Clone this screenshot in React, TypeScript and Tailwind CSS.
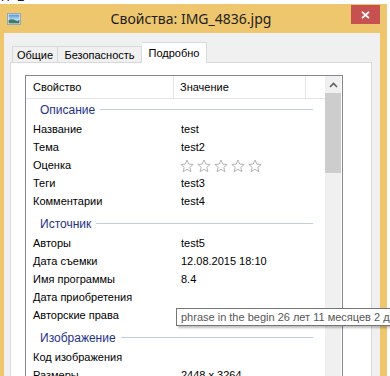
const groups: { title: string; rows: [string, string][] }[] = [
  {
    title: 'Описание',
    rows: [['Название', 'test'], ['Тема', 'test2'], ['Оценка', '*'], ['Теги', 'test3'], ['Комментарии', 'test4']],
  },
  {
    title: 'Источник',
    rows: [['Авторы', 'test5'], ['Дата съемки', '12.08.2015 18:10'], ['Имя программы', '8.4'], ['Дата приобретения', ''], ['Авторские права', '']],
  },
  {
    title: 'Изображение',
    rows: [['Код изображения', ''], ['Размеры', '2448 x 3264']],
  },
]

function Star() {
  return (
    <svg width="14" height="14" viewBox="0 0 14 14" className="shrink-0">
      <polygon points="7,1 8.8,5.1 13.2,5.4 9.8,8.3 10.9,12.7 7,10.3 3.1,12.7 4.2,8.3 0.8,5.4 5.2,5.1"
        fill="#fff" stroke="#b4b4b4" strokeWidth="1" strokeLinejoin="round" />
    </svg>
  )
}

function Stars() {
  return (
    <div className="flex items-center gap-[3px] -ml-px">
      {[0, 1, 2, 3, 4].map((i) => <Star key={i} />)}
    </div>
  )
}

function PictureIcon() {
  return (
    <svg width="14" height="12" viewBox="0 0 14 12">
      <defs>
        <linearGradient id="sky" x1="0" y1="0" x2="0" y2="1">
          <stop offset="0" stopColor="#4f95d4" />
          <stop offset="1" stopColor="#cfe6f5" />
        </linearGradient>
      </defs>
      <rect x="0.5" y="0.5" width="13" height="11" fill="#fff" stroke="#9aa7b3" />
      <rect x="1.5" y="1.5" width="11" height="6" fill="url(#sky)" />
      <path d="M1.5 10.5 L1.5 7 Q5 5.5 8 7 T12.5 6.5 L12.5 10.5 Z" fill="#3f7d6a" />
    </svg>
  )
}

export default function App() {
  return (
    <div className="relative w-[390px] h-[376px] overflow-hidden bg-white font-['Liberation_Sans',sans-serif] text-[11px] text-black">
      <div className="h-[4px] overflow-hidden">
        <div className="-mt-[11px] text-[14px] leading-[14px] text-[#222] pl-px">ľ7 1</div>
      </div>
      <div className="w-[387px] bg-[#eec66e] h-[380px] flex flex-col">
        <div className="h-[29px] flex items-start">
          <div className="w-[31px] pl-[7px] pt-[9px]">
            <PictureIcon />
          </div>
          <div className="flex-1 text-center text-[14px] leading-[30px] text-[#1e1e1e] font-['Noto_Sans',sans-serif]">
            Свойства: IMG_4836.jpg
          </div>
          <div className="w-[36px] pr-[7px] pt-px">
            <div className="h-[19px] w-[29px] bg-[#c75050] flex items-center justify-center">
              <svg width="9" height="8" viewBox="0 0 9 8">
                <path d="M1 0.8 L8 7.2 M8 0.8 L1 7.2" stroke="#fff" strokeWidth="1.8" />
              </svg>
            </div>
          </div>
        </div>
        <div className="ml-[4px] mr-[7px] flex-1 bg-[#f0f0f0] pt-[9px] pl-[6px] pr-[8px]">
          <div className="relative z-10 flex items-end h-[21px] pl-[2px]">
            <div className="h-[16px] mb-px w-[46px] border border-b-0 border-[#d9d9d9] bg-[#f0f0f0] flex items-center justify-center pt-px leading-none">Общие</div>
            <div className="h-[16px] mb-px w-[84px] border border-b-0 border-l-0 border-[#d9d9d9] bg-[#f0f0f0] flex items-center justify-center pt-px leading-none">Безопасность</div>
            <div className="h-[21px] w-[65px] border border-b-0 border-l-0 border-[#d9d9d9] bg-white flex items-start justify-center pt-[5px] leading-none">Подробно</div>
          </div>
          <div className="-mt-px h-[320px] border border-[#d9d9d9] bg-white pl-[14px] pt-[12px]">
            <div className="w-[318px] h-[310px] border border-[#828790] flex">
              <div className="w-[299px] flex flex-col">
                <div className="h-[25px] flex border-b border-[#e5e5e5]">
                  <div className="w-[148px] pl-[7px] pt-px flex items-center border-r border-[#e5e5e5]">Свойство</div>
                  <div className="w-[132px] pl-[6px] pt-px flex items-center border-r border-[#e5e5e5]">Значение</div>
                </div>
                {groups.map((g, gi) => (
                  <div key={g.title}>
                    <div className={`h-[21px] flex items-center pl-[14px] pr-[12px] ${gi > 0 ? 'mt-[3px]' : ''}`}>
                      <span className="text-[12px] text-[#1e3287] pr-[5px] pt-px">{g.title}</span>
                      <div className="flex-1 h-px bg-[#c2cddc]" />
                    </div>
                    {g.rows.map(([name, value]) => (
                      <div key={name} className="h-[18px] flex items-center pl-[7px] pt-px">
                        <div className="w-[148px] whitespace-nowrap">{name}</div>
                        <div className="whitespace-nowrap">{value === '*' ? <Stars /> : value}</div>
                      </div>
                    ))}
                  </div>
                ))}
              </div>
              <div className="w-[16px] bg-[#f0f0f0] flex flex-col">
                <div className="h-[17px] flex items-center justify-center">
                  <svg width="9" height="6" viewBox="0 0 9 6">
                    <path d="M1 5 L4.5 1.5 L8 5" fill="none" stroke="#606060" strokeWidth="1.6" />
                  </svg>
                </div>
                <div className="h-[80px] bg-[#cdcdcd]" />
              </div>
            </div>
          </div>
        </div>
      </div>
      <div className="absolute left-[176px] top-[308px] h-[18px] w-[260px] border border-[#767676] bg-white shadow-[2px_2px_2px_rgba(0,0,0,0.25)] pl-[4px] pt-px flex items-center whitespace-nowrap text-[#575757]">
        phrase in the begin 26 лет 11 месяцев 2 дня
      </div>
    </div>
  )
}
